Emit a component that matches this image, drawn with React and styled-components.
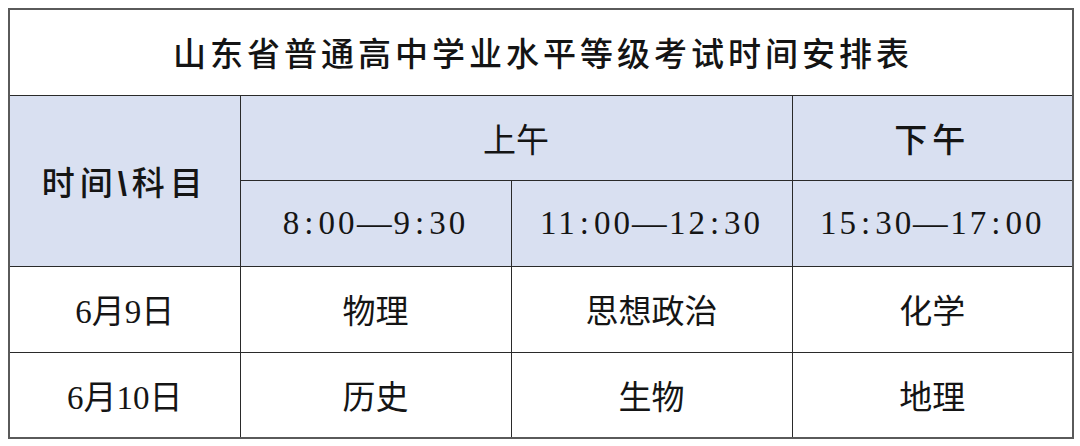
import React from 'react';
import styled, { createGlobalStyle } from 'styled-components';

const GlobalStyle = createGlobalStyle`
  html, body {
    margin: 0;
    padding: 0;
    background: #ffffff;
  }
  body {
    padding: 8px;
    font-family: "Liberation Serif", "Noto Sans CJK SC", serif;
    color: #111;
  }
`;

const Table = styled.table`
  border-collapse: collapse;
  table-layout: fixed;
  width: 1064px;
  border: 2px solid #5a5a5a;
`;

const Col = styled.col`
  width: ${(p) => p.$w}px;
`;

const Row = styled.tr`
  height: ${(p) => p.$h}px;
  background: ${(p) => (p.$head ? '#d9e0f1' : '#ffffff')};
`;

const Title = styled.th`
  border: 1.5px solid #2a2a2a;
  font-family: "Noto Sans CJK SC", sans-serif;
  font-weight: 500;
  font-size: 33px;
  letter-spacing: 4px;
  text-align: center;
  vertical-align: middle;
  padding: 0 0 0 4px;
  color: #141414;
`;

const Cell = styled.td`
  border: 1.5px solid #2a2a2a;
  text-align: center;
  vertical-align: middle;
  padding: 0;
  font-size: 33px;
  font-weight: ${(p) => (p.$bold ? 500 : 400)};
  font-family: ${(p) =>
    p.$time ? '"Liberation Serif", serif' : '"Liberation Serif", "Noto Sans CJK SC", serif'};
  letter-spacing: ${(p) => (p.$time ? '3px' : p.$spaced ? '5px' : '0')};
  color: #151515;
`;

const Slash = styled.span`
  font-family: "Liberation Sans", sans-serif;
  font-weight: 700;
`;

const Colon = styled.span`
  display: inline-block;
  margin: 0 2px;
`;

const Dash = styled.span`
  display: inline-block;
  transform: scaleX(1.05);
`;

function Time({ from, to }) {
  const part = (t) => {
    const [h, m] = t.split(':');
    return (
      <>
        {h}
        <Colon>:</Colon>
        {m}
      </>
    );
  };
  return (
    <>
      {part(from)}
      <Dash>—</Dash>
      {part(to)}
    </>
  );
}

const rows = [
  { date: '6月9日', am1: '物理', am2: '思想政治', pm: '化学' },
  { date: '6月10日', am1: '历史', am2: '生物', pm: '地理' },
];

export default function App() {
  return (
    <>
      <GlobalStyle />
      <Table>
        <colgroup>
          <Col $w={231} />
          <Col $w={271} />
          <Col $w={281} />
          <Col $w={281} />
        </colgroup>
        <tbody>
          <Row $h={86}>
            <Title colSpan={4}>山东省普通高中学业水平等级考试时间安排表</Title>
          </Row>
          <Row $h={85} $head>
            <Cell rowSpan={2} $bold $spaced>
              时间<Slash>\</Slash>科目
            </Cell>
            <Cell colSpan={2}>上午</Cell>
            <Cell $bold $spaced>下午</Cell>
          </Row>
          <Row $h={86} $head>
            <Cell $time><Time from="8:00" to="9:30" /></Cell>
            <Cell $time><Time from="11:00" to="12:30" /></Cell>
            <Cell $time><Time from="15:30" to="17:00" /></Cell>
          </Row>
          {rows.map((r) => (
            <Row $h={86} key={r.date}>
              <Cell>{r.date}</Cell>
              <Cell>{r.am1}</Cell>
              <Cell>{r.am2}</Cell>
              <Cell>{r.pm}</Cell>
            </Row>
          ))}
        </tbody>
      </Table>
    </>
  );
}
